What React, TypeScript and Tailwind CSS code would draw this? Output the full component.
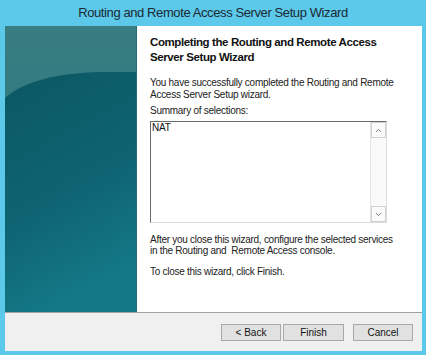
import { ChevronDown, ChevronUp } from "lucide-react";

function SidePanel() {
  return (
    <div className="w-[132px] h-full bg-[#0f5f6c]">
      <svg width="132" height="286" viewBox="0 0 132 286" className="block">
        <defs>
          <linearGradient id="top" x1="0" y1="0" x2="0" y2="1">
            <stop offset="0" stopColor="#377d82" />
            <stop offset="1" stopColor="#2b757c" />
          </linearGradient>
          <linearGradient id="wave" x1="0" y1="0" x2="0.3" y2="1">
            <stop offset="0" stopColor="#0b5763" />
            <stop offset="0.6" stopColor="#0e6472" />
            <stop offset="1" stopColor="#147886" />
          </linearGradient>
        </defs>
        <rect width="132" height="286" fill="url(#top)" />
        <path d="M0 72 C 18 56, 50 47, 96 46 L132 46 L132 286 L0 286 Z" fill="url(#wave)" />
        <rect x="131" width="1" height="286" fill="#2a6a72" />
      </svg>
    </div>
  );
}

function Btn({ label }: { label: string }) {
  return (
    <button
      type="button"
      className="h-[17px] bg-[#e1e1e1] border border-[#a8a8a8] text-[10px] text-[#111] leading-none"
    >
      {label}
    </button>
  );
}

export default function App() {
  return (
    <div className="w-[426px] h-[355px] bg-[#5cc8ea] flex flex-col font-['Liberation_Sans',Arial,sans-serif] text-black overflow-hidden">
      <div className="h-[26px] flex items-center justify-center text-[13px] text-[#1b2a33] tracking-[-0.4px] pb-[1px]">
        Routing and Remote Access Server Setup Wizard
      </div>
      <div className="flex-1 ml-[5px] mr-[4px] mb-[4px] flex flex-col">
        <div className="h-[286px] flex">
          <SidePanel />
          <div className="flex-1 bg-white pl-[13px] pt-[9px] flex flex-col">
            <h1 className="text-[11.5px] font-bold leading-[15px] tracking-[-0.4px] text-[#111]">
              Completing the Routing and Remote Access
              <br />
              Server Setup Wizard
            </h1>
            <p className="mt-[12px] text-[10px] leading-[12px] tracking-[-0.27px] text-[#222]">
              You have successfully completed the Routing and Remote
              <br />
              Access Server Setup wizard.
            </p>
            <p className="mt-[4px] text-[10px] leading-[12px] tracking-[-0.27px] text-[#222]">Summary of selections:</p>
            <div className="mt-[4px] w-[237px] h-[102px] flex border border-t-[#6a6a6a] border-l-[#6a6a6a] border-r-[#dcdcdc] border-b-[#dcdcdc] bg-white">
              <div className="flex-1 px-[1px] text-[10px] leading-[12px] tracking-[-0.2px] text-[#111]">NAT</div>
              <div className="w-[16px] flex flex-col justify-between bg-[#fafafa] border-l border-[#e6e6e6]">
                <div className="h-[16px] flex items-center justify-center border border-[#d0d0d0]">
                  <ChevronUp size={9} strokeWidth={2} color="#555" />
                </div>
                <div className="h-[16px] flex items-center justify-center border border-[#d0d0d0]">
                  <ChevronDown size={9} strokeWidth={2} color="#555" />
                </div>
              </div>
            </div>
            <p className="mt-[11px] text-[10px] leading-[11px] tracking-[-0.27px] text-[#222]">
              After you close this wizard, configure the selected services
              <br />
              in the Routing and&nbsp; Remote Access console.
            </p>
            <p className="mt-[10px] text-[10px] leading-[12px] tracking-[-0.27px] text-[#222]">
              To close this wizard, click Finish.
            </p>
          </div>
        </div>
        <div className="flex-1 bg-[#f0f0f0] border-t border-[#a0a0a0] flex items-center justify-end pr-[9px] pt-[1px]">
          <div className="flex gap-[2px]">
            <div className="w-[60px] flex flex-col"><Btn label="< Back" /></div>
            <div className="w-[61px] flex flex-col"><Btn label="Finish" /></div>
          </div>
          <div className="w-[60px] ml-[9px] flex flex-col">
            <Btn label="Cancel" />
          </div>
        </div>
      </div>
    </div>
  );
}
